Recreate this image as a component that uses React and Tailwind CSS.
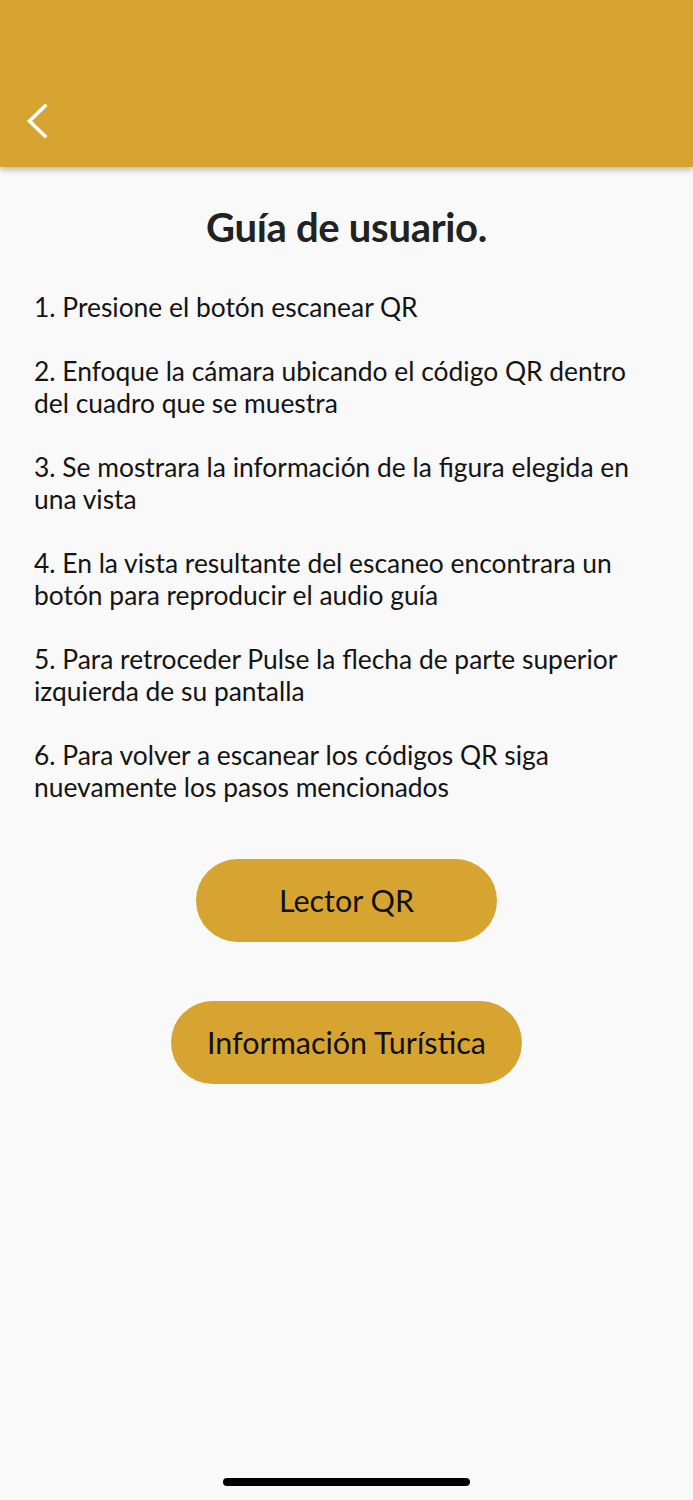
import React from "react";

const steps = [
  "1. Presione el botón escanear QR",
  "2. Enfoque la cámara ubicando el código QR dentro del cuadro que se muestra",
  "3. Se mostrara la información de la figura elegida en una vista",
  "4. En la vista resultante del escaneo encontrara un botón para reproducir el audio guía",
  "5. Para retroceder Pulse la flecha de parte superior izquierda de su pantalla",
  "6. Para volver a escanear los códigos QR siga nuevamente los pasos mencionados",
];

export default function App() {
  return (
    <div
      className="relative w-[693px] h-[1500px] bg-[#f9f9f9] overflow-hidden"
      style={{ fontFamily: "Lato, 'Noto Sans', sans-serif" }}
    >
      <header className="h-[167px] bg-[#d8a431] shadow-[0_3px_6px_rgba(0,0,0,0.25)] flex items-end pb-[28px] pl-[24px] relative z-10">
        <svg width="26" height="36" viewBox="0 0 26 36" fill="none">
          <path d="M21 3 L5.5 18 L21 33" stroke="#ffffff" strokeWidth="3.6" strokeLinecap="square" strokeLinejoin="miter" />
        </svg>
      </header>
      <h1 className="mt-[36px] text-center text-[40px] leading-[48px] font-bold text-[#222222] tracking-[-0.3px]">
        Guía de usuario.
      </h1>
      <div className="mt-[40px] px-[34px] flex flex-col gap-[32px] text-[26.4px] leading-[32px] text-[#141414]">
        {steps.map((s) => (
          <p key={s}>{s}</p>
        ))}
      </div>
      <div className="mt-[56px] flex flex-col items-center gap-[59px]">
        <button className="w-[301px] h-[83px] rounded-full bg-[#d8a431] text-[30.5px] text-[#111111]">
          Lector QR
        </button>
        <button className="w-[351px] h-[83px] rounded-full bg-[#d8a431] text-[30.5px] text-[#111111]">
          Información Turística
        </button>
      </div>
      <div className="absolute left-[223px] top-[1478px] w-[247px] h-[8px] rounded-full bg-black" />
    </div>
  );
}
